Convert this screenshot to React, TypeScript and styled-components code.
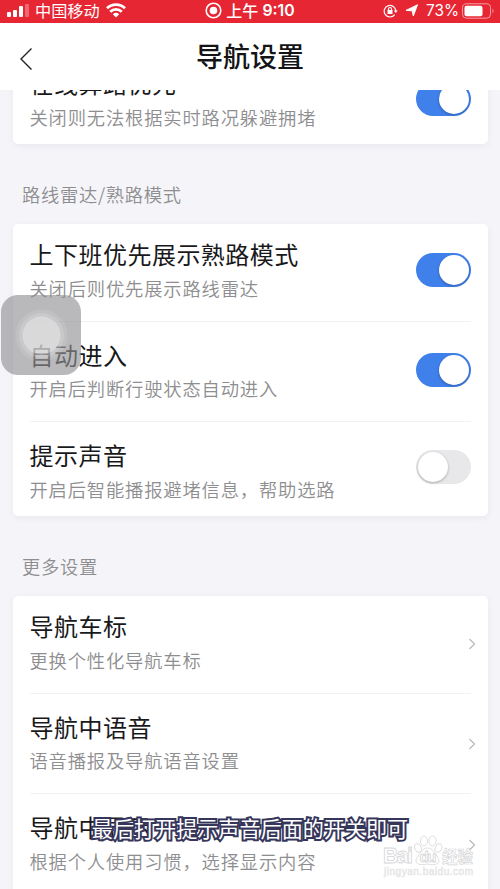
import React from "react";
import styled, { createGlobalStyle } from "styled-components";

const Global = createGlobalStyle`
  * { box-sizing: border-box; }
  body { margin: 0; background: #f5f5f9; font-family: "Noto Sans CJK SC", sans-serif; }
`;

const Screen = styled.div`
  position: relative;
  width: 500px;
  height: 889px;
  overflow: hidden;
  display: flex;
  flex-direction: column;
  background: #f5f5f9;
`;

const StatusBar = styled.div`
  flex: none;
  height: 23px;
  display: grid;
  grid-template-columns: 1fr auto 1fr;
  align-items: center;
  padding: 0 5px 2px 7px;
  background: #e72634;
  color: #fff;
`;

const StatusGroup = styled.div<{ $end?: boolean }>`
  display: flex;
  align-items: center;
  justify-content: ${(p) => (p.$end ? "flex-end" : "flex-start")};
  height: 20px;
`;

const Carrier = styled.span`
  margin: -1px 6px 0 6px;
  font-size: 16.2px;
  line-height: 22px;
`;

const Clock = styled.div`
  display: flex;
  align-items: center;
  margin: -1px 2px 0 4px;
  font-size: 16px;
  font-weight: 500;
  line-height: 24px;
`;

const Time = styled.b`
  margin: 1px 0 0 4px;
  font: 600 15.8px/20px Inter, sans-serif;
`;

const LocationArrow = styled.svg`
  margin-left: 7px;
`;

const Percent = styled.span`
  margin: 0 3px 0 7px;
  font: 400 15.4px/20px Inter, sans-serif;
`;

const Header = styled.header`
  flex: none;
  height: 67px;
  display: grid;
  grid-template-columns: 60px 1fr 60px;
  align-items: center;
  background: #fff;
  svg { margin: 5px 0 0 19px; }
`;

const Heading = styled.h1`
  margin: -1px 0 0;
  text-align: center;
  font-size: 27px;
  font-weight: 500;
  line-height: 40px;
  color: #141416;
`;

const Content = styled.main`
  flex: 1;
  min-height: 0;
  overflow: hidden;
`;

const Card = styled.section<{ $scrolled?: boolean }>`
  width: 475px;
  height: ${(p) => (p.$scrolled ? "91px" : "auto")};
  margin: ${(p) => (p.$scrolled ? "-37px" : "0")} 0 0 12.5px;
  border-radius: 5px;
  background: #fff;
  box-shadow: 0 2px 7px rgba(50, 50, 100, 0.07);
`;

const SectionLabel = styled.h2`
  height: 80px;
  margin: 0;
  padding: 37px 0 0 22px;
  font-size: 18.3px;
  font-weight: 350;
  line-height: 27px;
  letter-spacing: 0.7px;
  color: #8e8e90;
`;

const RowBox = styled.div<{ $first: boolean; $last: boolean }>`
  height: ${(p) => (p.$first ? 97.5 : p.$last ? 94 : 100.5)}px;
  margin: 0 16.5px 0 17px;
  padding-top: ${(p) => (p.$first ? 12 : 15)}px;
  display: flex;
  justify-content: space-between;
  border-bottom: ${(p) => (p.$last ? "none" : "1px solid #f2f2f4")};
`;

const Title = styled.div`
  font-size: 24px;
  line-height: 36px;
  letter-spacing: 0.48px;
  color: #19191b;
`;

const Description = styled.div`
  margin-top: 1.6px;
  font-size: 18.3px;
  font-weight: 350;
  line-height: 28px;
  letter-spacing: 0.84px;
  color: #8e8e90;
`;

const Switch = styled.div<{ $on: boolean; $offset: number }>`
  flex: none;
  width: 55px;
  height: 34px;
  margin-top: ${(p) => p.$offset}px;
  padding: 2px;
  display: flex;
  justify-content: ${(p) => (p.$on ? "flex-end" : "flex-start")};
  border-radius: 17px;
  background: ${(p) => (p.$on ? "#3f80eb" : "#e8e8ea")};
`;

const Knob = styled.div`
  width: 30px;
  height: 30px;
  border-radius: 50%;
  background: #fff;
  box-shadow: 0 1px 3px rgba(0, 0, 0, 0.27);
`;

const Arrow = styled.svg<{ $first: boolean }>`
  flex: none;
  width: 8px;
  height: 14px;
  margin: ${(p) => (p.$first ? 29 : 28.5)}px -5px 0 0;
`;

const AssistiveTouch = styled.div`
  position: absolute;
  left: 1px;
  top: 295px;
  width: 80px;
  height: 80px;
  border-radius: 17px;
  background: rgba(145, 145, 148, 0.64);
`;

const Caption = styled.div`
  position: absolute;
  left: 0;
  right: 0;
  top: 812px;
  text-align: center;
  white-space: nowrap;
  font-size: 21.1px;
  font-weight: 400;
  line-height: 32px;
  color: #fff;
  -webkit-text-stroke: 4px #36365a;
  paint-order: stroke fill;
`;

const Watermark = styled.svg`
  position: absolute;
  left: 380px;
  top: 832px;
`;

type RowProps = {
  title: string;
  note: string;
  on?: boolean;
  first?: boolean;
  last?: boolean;
};

function Row({ title, note, on, first = false, last = false }: RowProps) {
  const offset = first ? 17 : last ? 13 : 16.5;
  return (
    <RowBox $first={first} $last={last}>
      <div>
        <Title>{title}</Title>
        <Description>{note}</Description>
      </div>
      {on === undefined ? (
        <Arrow $first={first} viewBox="0 0 8 14" fill="none" stroke="#b8b8bc" strokeWidth="1.2">
          <path d="M1.5 2L6.5 7L1.5 12" />
        </Arrow>
      ) : (
        <Switch $on={on} $offset={offset}><Knob /></Switch>
      )}
    </RowBox>
  );
}

export default function App() {
  return (
    <Screen>
      <Global />
      <StatusBar>
        <StatusGroup>
          <svg width="22" height="13" viewBox="0 0 22 13" fill="#fff">
            <rect y="8" width="4" height="5" rx="1" />
            <rect x="6" y="6" width="4" height="7" rx="1" />
            <rect x="12" y="2" width="4" height="11" rx="1" />
            <rect x="18" y="0" width="4" height="13" rx="1" opacity="0.3" />
          </svg>
          <Carrier>中国移动</Carrier>
          <svg width="20" height="15" viewBox="0 0 20 15" fill="none" stroke="#fff" strokeWidth="2.7">
            <path d="M1 5.2C6 .4 14 .4 19 5.2M4.2 8.7C7.5 5.5 12.5 5.5 15.8 8.7" />
            <path d="M6.8 11.2Q10 8.5 13.2 11.2L10 14.6Z" fill="#fff" stroke="none" />
          </svg>
        </StatusGroup>
        <StatusGroup>
          <svg width="17" height="17" viewBox="0 0 17 17">
            <circle cx="8.5" cy="8.5" r="7.3" fill="none" stroke="#fff" strokeWidth="1.6" />
            <circle cx="8.5" cy="8.5" r="3.8" fill="#fff" />
          </svg>
          <Clock>上午<Time>9:10</Time></Clock>
        </StatusGroup>
        <StatusGroup $end>
          <svg width="15" height="14" viewBox="0 0 15 14" fill="none" stroke="#fff" strokeWidth="1.2">
            <path d="M11.7 10.6A5.8 5.8 0 1 1 12.8 7" />
            <path d="M10.8 6.4H14.8L12.8 9Z" fill="#fff" stroke="none" />
            <rect x="4.5" y="6" width="5" height="4" fill="#fff" stroke="none" />
            <path d="M5.5 6.2V5a1.5 1.5 0 0 1 3 0V6.2" />
          </svg>
          <LocationArrow width="14" height="13" viewBox="0 0 14 13" fill="#fff" stroke="#fff" strokeLinejoin="round">
            <path d="M12.5 0.8L8.3 12L7.2 6.8L1 6.4Z" />
          </LocationArrow>
          <Percent>73%</Percent>
          <svg width="33" height="16" viewBox="0 0 33 16">
            <rect x="0.5" y="0.8" width="28" height="14.4" rx="4" fill="none" stroke="#fff" strokeOpacity="0.55" />
            <rect x="2.5" y="2.8" width="18" height="10.4" rx="2" fill="#fff" />
            <path d="M30.5 5.5Q32.5 8 30.5 10.5Z" fill="#fff" opacity="0.55" />
          </svg>
        </StatusGroup>
      </StatusBar>

      <Header>
        <svg width="15" height="24" viewBox="0 0 15 24" fill="none" stroke="#222" strokeWidth="1.4">
          <path d="M12.5 1.5L2 12L12.5 22.5" />
        </svg>
        <Heading>导航设置</Heading>
      </Header>

      <Content>
        <Card $scrolled>
          <Row title="在线算路优先" note="关闭则无法根据实时路况躲避拥堵" on first last />
        </Card>
        <SectionLabel>路线雷达/熟路模式</SectionLabel>
        <Card>
          <Row title="上下班优先展示熟路模式" note="关闭后则优先展示路线雷达" on first />
          <Row title="自动进入" note="开启后判断行驶状态自动进入" on />
          <Row title="提示声音" note="开启后智能播报避堵信息，帮助选路" on={false} last />
        </Card>
        <SectionLabel>更多设置</SectionLabel>
        <Card>
          <Row title="导航车标" note="更换个性化导航车标" first />
          <Row title="导航中语音" note="语音播报及导航语音设置" />
          <Row title="导航中显示" note="根据个人使用习惯，选择显示内容" />
        </Card>
      </Content>

      <AssistiveTouch>
        <svg width="80" height="80" viewBox="0 0 80 80" fill="#fff">
          <circle cx="40.5" cy="40.5" r="26" opacity="0.1" />
          <circle cx="40.5" cy="40.5" r="22.5" opacity="0.15" />
          <circle cx="40.5" cy="40.5" r="19" opacity="0.3" />
        </svg>
      </AssistiveTouch>
      <Caption>最后打开提示声音后面的开关即可</Caption>
      <Watermark width="98" height="48" viewBox="0 0 98 48" fill="#fff" stroke="#d6d6d8" strokeWidth="0.8">
        <g fontFamily="Liberation Sans, sans-serif" fontWeight="700">
          <text x="3" y="31" fontSize="21.5" textLength="30">Bai</text>
          <ellipse cx="38" cy="16" rx="3.2" ry="4.5" transform="rotate(-20 38 16)" />
          <ellipse cx="44" cy="9" rx="3.6" ry="5" />
          <ellipse cx="52.5" cy="9" rx="3.6" ry="5" />
          <ellipse cx="58.5" cy="16" rx="3.2" ry="4.5" transform="rotate(20 58.5 16)" />
          <path d="M47.5 16C53 16 54 21 57 24C62 31 57 34 47.5 32C38 34 33 31 38 24C41 21 42 16 47.5 16Z" />
          <text x="39.5" y="30" fontSize="15" textLength="17">du</text>
          <text x="4" y="43" fontSize="10" fontWeight="400" fill="#eeeeef" stroke="#e4e4e6" strokeWidth="0.5" textLength="89">jingyan.baidu.com</text>
        </g>
        <text x="62" y="31" fontFamily="Noto Sans CJK SC, sans-serif" fontWeight="700" fontSize="16.5" strokeWidth="0.7" textLength="31" lengthAdjust="spacingAndGlyphs">经验</text>
      </Watermark>
    </Screen>
  );
}
